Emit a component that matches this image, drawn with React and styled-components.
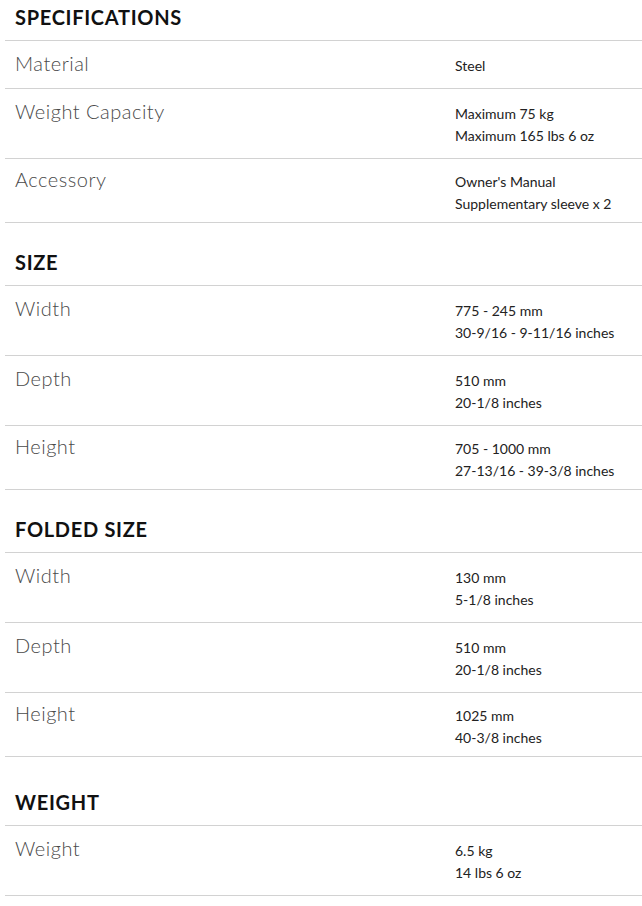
import React from 'react'
import styled, { createGlobalStyle } from 'styled-components'

const GlobalStyle = createGlobalStyle`
  html, body {
    margin: 0;
    padding: 0;
    background: #fff;
  }
  body {
    font-family: Lato, "Liberation Sans", Arial, sans-serif;
    -webkit-font-smoothing: antialiased;
  }
`

const Sheet = styled.div`
  padding-left: 5px;
  width: 637px;
`

const Section = styled.section`
  margin-top: ${({ $gap }) => $gap || 0}px;
`

const SectionTitle = styled.h2`
  margin: 0;
  padding: 6px 10px 11px;
  font-size: 20px;
  line-height: 23px;
  font-weight: 700;
  color: #111;
  letter-spacing: 0.7px;
  border-bottom: 1px solid #d2d2d2;
`

const Row = styled.div`
  display: grid;
  grid-template-columns: 440px 1fr;
  align-items: baseline;
  padding: ${({ $compact }) => ($compact ? '9px 10px 7px' : '11px 10px 11px')};
  border-bottom: 1px solid #d2d2d2;
`

const Label = styled.div`
  font-size: 20px;
  line-height: 22px;
  font-weight: 300;
  letter-spacing: 0.5px;
  color: #4a4a4a;
`

const Values = styled.div`
  font-size: 14px;
  line-height: 22px;
  font-weight: 400;
  color: #222;
`

const Line = styled.div``

const specs = [
  {
    title: 'SPECIFICATIONS',
    gap: 0,
    rows: [
      { label: 'Material', values: ['Steel'] },
      { label: 'Weight Capacity', values: ['Maximum 75 kg', 'Maximum 165 lbs 6 oz'] },
      { label: 'Accessory', values: ["Owner's Manual", 'Supplementary sleeve x 2'], compact: true },
    ],
  },
  {
    title: 'SIZE',
    gap: 22,
    rows: [
      { label: 'Width', values: ['775 - 245 mm', '30-9/16 - 9-11/16 inches'] },
      { label: 'Depth', values: ['510 mm', '20-1/8 inches'] },
      { label: 'Height', values: ['705 - 1000 mm', '27-13/16 - 39-3/8 inches'], compact: true },
    ],
  },
  {
    title: 'FOLDED SIZE',
    gap: 22,
    rows: [
      { label: 'Width', values: ['130 mm', '5-1/8 inches'] },
      { label: 'Depth', values: ['510 mm', '20-1/8 inches'] },
      { label: 'Height', values: ['1025 mm', '40-3/8 inches'], compact: true },
    ],
  },
  {
    title: 'WEIGHT',
    gap: 28,
    rows: [
      { label: 'Weight', values: ['6.5 kg', '14 lbs 6 oz'] },
    ],
  },
]

export default function App() {
  return (
    <>
      <GlobalStyle />
      <Sheet>
        {specs.map((section) => (
          <Section key={section.title} $gap={section.gap}>
            <SectionTitle>{section.title}</SectionTitle>
            {section.rows.map((row) => (
              <Row key={row.label} $compact={row.compact}>
                <Label>{row.label}</Label>
                <Values>
                  {row.values.map((v) => (
                    <Line key={v}>{v}</Line>
                  ))}
                </Values>
              </Row>
            ))}
          </Section>
        ))}
      </Sheet>
    </>
  )
}
